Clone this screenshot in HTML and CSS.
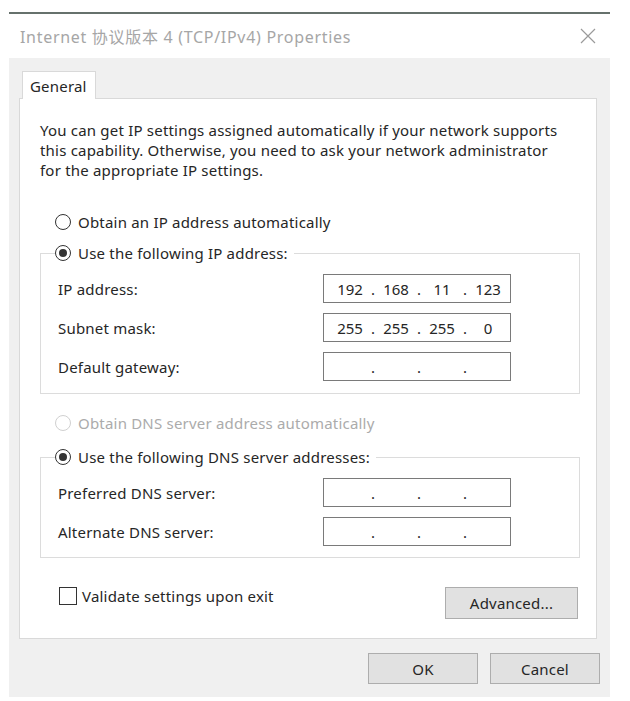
FILE: index.html
```html
<!DOCTYPE html>
<html>
<head>
<meta charset="utf-8" />
<title>Internet Protocol Version 4 Properties</title>
<link rel="stylesheet" href="styles.css">
</head>
<body>

<div class="window">
	<div class="titlebar">
		<span class="title">Internet 协议版本 4 (TCP/IPv4) Properties</span>
		<svg class="close" width="16" height="16" viewBox="0 0 16 16">
			<path d="M1 1 L15 15 M15 1 L1 15" stroke="#9a9a9a" stroke-width="1.2" fill="none" />
		</svg>
	</div>

	<div class="dialog">
		<div class="tabs">
			<div class="tab">General</div>
		</div>

		<div class="panel">
			<p class="intro">You can get IP settings assigned automatically if your network supports<br>this capability. Otherwise, you need to ask your network administrator<br>for the appropriate IP settings.</p>

			<div class="option ip-auto"><span class="radio"></span>Obtain an IP address automatically</div>

			<fieldset class="group ip-group">
				<legend class="option"><span class="radio checked"></span>Use the following IP address:</legend>

				<span class="label">IP address:</span>
				<div class="ipbox"><span>192</span><i>.</i><span>168</span><i>.</i><span>11</span><i>.</i><span>123</span></div>

				<span class="label">Subnet mask:</span>
				<div class="ipbox"><span>255</span><i>.</i><span>255</span><i>.</i><span>255</span><i>.</i><span>0</span></div>

				<span class="label">Default gateway:</span>
				<div class="ipbox"><span></span><i>.</i><span></span><i>.</i><span></span><i>.</i><span></span></div>
			</fieldset>

			<div class="option disabled dns-auto"><span class="radio"></span>Obtain DNS server address automatically</div>

			<fieldset class="group dns-group">
				<legend class="option"><span class="radio checked"></span>Use the following DNS server addresses:</legend>

				<span class="label">Preferred DNS server:</span>
				<div class="ipbox"><span></span><i>.</i><span></span><i>.</i><span></span><i>.</i><span></span></div>

				<span class="label">Alternate DNS server:</span>
				<div class="ipbox"><span></span><i>.</i><span></span><i>.</i><span></span><i>.</i><span></span></div>
			</fieldset>

			<div class="footer">
				<label class="check"><span class="box"></span>Validate settings upon exit</label>
				<button class="btn advanced">Advanced...</button>
			</div>
		</div>

		<div class="buttons">
			<button class="btn">OK</button>
			<button class="btn">Cancel</button>
		</div>
	</div>
</div>

</body>
</html>
```

FILE: styles.css
```css
body {
	margin: 0;
	background: white;
	font-family: "Noto Sans", "Noto Sans CJK SC", sans-serif;
	font-size: 15px;
	letter-spacing: 0.2px;
	color: #262626;
}

.window {
	margin: 12px 0 0 9px;
	width: 601px;
	border-top: 2px solid #66716c;
}

.titlebar {
	height: 44px;
	padding: 0 14px 0 11px;
	display: flex;
	align-items: center;
	justify-content: space-between;
}

.title {
	font-size: 16px;
	letter-spacing: 0.7px;
	color: #a6a6a6;
}

.dialog {
	background: #f0f0f0;
	padding: 13px 13px 13px 10px;
}

.tabs {
	display: flex;
	padding-left: 3px;
}

.tab {
	width: 74px;
	height: 28px;
	line-height: 28px;
	padding-left: 7px;
	box-sizing: border-box;
	background: white;
	border: 1px solid #d9d9d9;
	border-bottom: none;
	margin-bottom: -1px;
	position: relative;
	z-index: 1;
}

.panel {
	background: white;
	border: 1px solid #d9d9d9;
	padding: 21px 16px 19px 20px;
}

.intro {
	margin: 0;
	line-height: 20px;
}

.option {
	display: flex;
	align-items: center;
	height: 22px;
}

.ip-auto {
	margin: 31px 0 0 15px;
}

.dns-auto {
	margin: 18px 0 0 15px;
}

.disabled {
	color: #ababab;
}

.radio {
	width: 14px;
	height: 14px;
	border: 1px solid #333;
	border-radius: 50%;
	margin-right: 7px;
	position: relative;
	background: white;
}

.disabled .radio {
	border-color: #d0d0d0;
}

.radio.checked::after {
	content: "";
	position: absolute;
	left: 3px;
	top: 3px;
	width: 8px;
	height: 8px;
	border-radius: 50%;
	background: #333;
}

.group {
	margin: 9px 0 0 0;
	min-width: 0;
	border: 1px solid #dcdcdc;
	padding: 10px 0 12px 17px;
	display: grid;
	grid-template-columns: 265px 188px;
	row-gap: 10px;
	align-items: center;
}

.dns-group {
	margin-top: 12px;
	padding-bottom: 11px;
}

.group legend {
	padding: 0 6px 0 0;
	margin-left: -3px;
}

.ipbox {
	height: 29px;
	box-sizing: border-box;
	border: 1px solid #7a7a7a;
	display: flex;
	align-items: center;
	padding-left: 6px;
	letter-spacing: 0;
}

.ipbox span {
	width: 40px;
	text-align: center;
}

.ipbox i {
	font-style: normal;
	width: 6px;
	text-align: center;
}

.footer {
	margin-top: 29px;
	display: flex;
	justify-content: space-between;
	align-items: flex-start;
	padding-right: 2px;
}

.check {
	display: flex;
	align-items: center;
	height: 18px;
	margin-left: 19px;
}

.box {
	width: 16px;
	height: 16px;
	border: 1px solid #333;
	margin-right: 5px;
}

.btn {
	font-family: inherit;
	font-size: 15px;
	letter-spacing: 0.2px;
	color: #262626;
	background: #e1e1e1;
	border: 1px solid #adadad;
	height: 31px;
	padding: 0;
}

.advanced {
	width: 133px;
	height: 32px;
}

.buttons {
	margin: 14px -3px 0 0;
	display: flex;
	justify-content: flex-end;
	gap: 12px;
}

.buttons .btn {
	width: 110px;
}
```
